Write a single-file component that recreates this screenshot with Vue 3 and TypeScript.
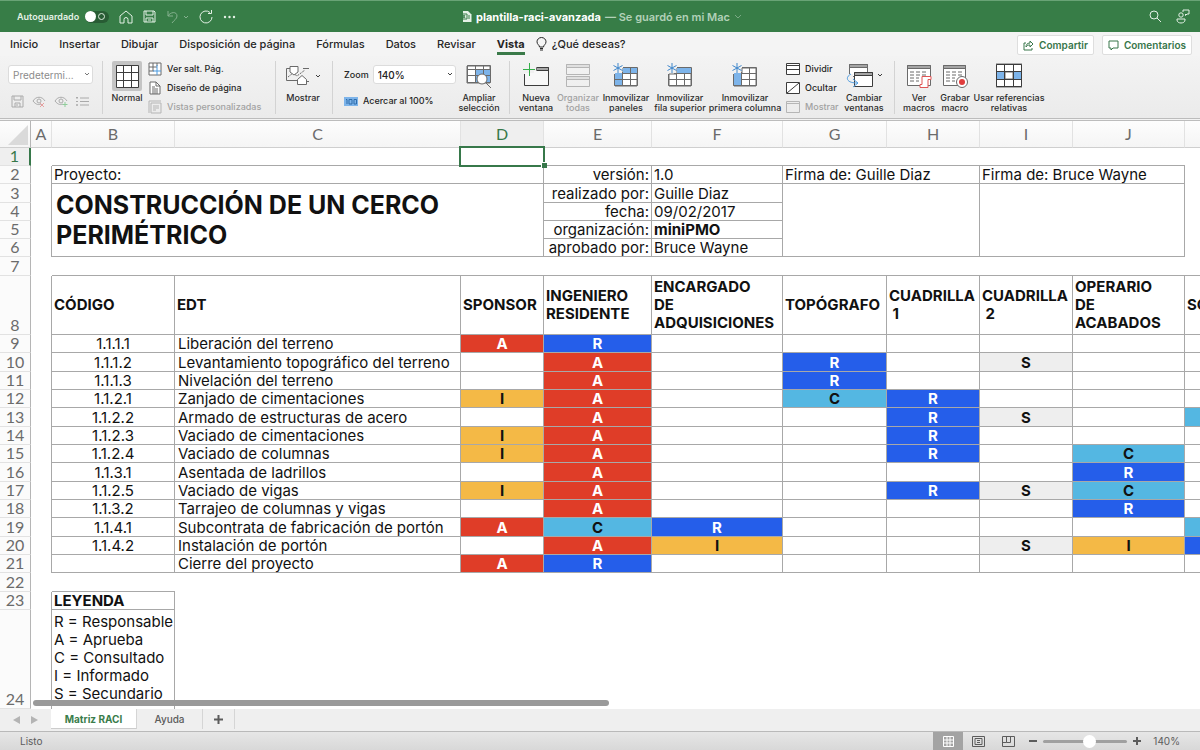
<script setup lang="ts">
import { ref } from 'vue'

interface Cell {
  text?: string
  cols?: number
  rows?: number
  kind?: string
}
interface Row {
  n: number
  size?: string
  cells: Cell[]
}

const menus = ['Inicio', 'Insertar', 'Dibujar', 'Disposición de página', 'Fórmulas', 'Datos', 'Revisar', 'Vista']
const columns = ['A', 'B', 'C', 'D', 'E', 'F', 'G', 'H', 'I', 'J']
const zoom = ref(56)

const blank = (count: number, kind = ''): Cell[] => Array.from({ length: count }, () => ({ kind }))

const tasks: [string, string, string][] = [
  ['1.1.1.1', 'Liberación del terreno', 'AR......'],
  ['1.1.1.2', 'Levantamiento topográfico del terreno', '.A.R.S..'],
  ['1.1.1.3', 'Nivelación del terreno', '.A.R....'],
  ['1.1.2.1', 'Zanjado de cimentaciones', 'IA.CR...'],
  ['1.1.2.2', 'Armado de estructuras de acero', '.A..RS.c'],
  ['1.1.2.3', 'Vaciado de cimentaciones', 'IA..R...'],
  ['1.1.2.4', 'Vaciado de columnas', 'IA..R.C.'],
  ['1.1.3.1', 'Asentada de ladrillos', '.A....R.'],
  ['1.1.2.5', 'Vaciado de vigas', 'IA..RSC.'],
  ['1.1.3.2', 'Tarrajeo de columnas y vigas', '.A....R.'],
  ['1.1.4.1', 'Subcontrata de fabricación de portón', 'ACR....c'],
  ['1.1.4.2', 'Instalación de portón', '.AI..SIr'],
  ['', 'Cierre del proyecto', 'AR......'],
]

const roleCell = (code: string): Cell => {
  if (code === '.') return { kind: 'box' }
  const upper = code.toUpperCase()
  return { text: upper === code ? code : '', kind: `box role role-${upper}` }
}

const info = (label: string, value: string, kind = ''): Cell[] => [
  { text: label, kind: 'box right' },
  { text: value, kind: `box ${kind}` },
]

const rows: Row[] = [
  { n: 1, cells: [{}, ...blank(2, 'under'), { kind: 'under active' }, ...blank(6, 'under'), {}] },
  {
    n: 2,
    cells: [
      { kind: 'side' },
      { text: 'Proyecto:', cols: 3, kind: 'box' },
      ...info('versión:', '1.0'),
      { text: 'Firma de: Guille Diaz', cols: 2, kind: 'box' },
      { text: 'Firma de: Bruce Wayne', cols: 2, kind: 'box' },
      {},
    ],
  },
  {
    n: 3,
    size: 'tall',
    cells: [
      { kind: 'side' },
      { text: 'CONSTRUCCIÓN DE UN CERCO\nPERIMÉTRICO', cols: 3, rows: 4, kind: 'box title' },
      ...info('realizado por:', 'Guille Diaz'),
      { cols: 2, rows: 4, kind: 'box' },
      { cols: 2, rows: 4, kind: 'box' },
      {},
    ],
  },
  { n: 4, cells: [{ kind: 'side' }, ...info('fecha:', '09/02/2017'), {}] },
  { n: 5, cells: [{ kind: 'side' }, ...info('organización:', 'miniPMO', 'strong'), {}] },
  { n: 6, cells: [{ kind: 'side' }, ...info('aprobado por:', 'Bruce Wayne'), {}] },
  { n: 7, size: 'tall', cells: [{}, ...blank(10, 'under')] },
  {
    n: 8,
    size: 'heading',
    cells: [
      { kind: 'side' },
      ...['CÓDIGO', 'EDT', 'SPONSOR', 'INGENIERO\nRESIDENTE', 'ENCARGADO\nDE\nADQUISICIONES', 'TOPÓGRAFO', 'CUADRILLA\n 1', 'CUADRILLA\n 2', 'OPERARIO\nDE\nACABADOS', 'SO'].map(
        (text) => ({ text, kind: 'box head' }),
      ),
    ],
  },
  ...tasks.map(([code, name, roles], i) => ({
    n: i + 9,
    size: i % 3 === 1 ? 'tall' : '',
    cells: [{ kind: 'side' }, { text: code, kind: 'box center' }, { text: name, kind: 'box task' }, ...roles.split('').map(roleCell)],
  })),
  { n: 22, size: 'tall', cells: [{}, { kind: 'under' }, ...blank(9)] },
  { n: 23, cells: [{ kind: 'side' }, { text: 'LEYENDA', kind: 'box strong' }, ...blank(9)] },
  {
    n: 24,
    size: 'last',
    cells: [
      { kind: 'side' },
      { text: 'R = Responsable\nA = Aprueba\nC = Consultado\nI = Informado\nS = Secundario', kind: 'side legend' },
      ...blank(9),
    ],
  },
]
</script>

<template>
  <div class="app">
    <header class="titlebar">
      <div class="quick">
        <label class="auto">Autoguardado
          <input type="checkbox" class="toggle" />
        </label>
        <button aria-label="Inicio"><svg width="14" height="14" viewBox="0 0 14 14"><path d="M1 6 7 1l6 5v7H9V9.500a2 2 0 0 0-4 0V13H1z" /></svg></button>
        <button aria-label="Guardar"><svg width="13" height="13" viewBox="0 0 13 13"><path d="M1 1h10l1 1v10H1zM3 1v4h7V1M3 12V8h7v4M5 10h3" /></svg></button>
        <button class="dim" aria-label="Deshacer"><svg width="23" height="14" viewBox="0 0 23 14"><path d="M2 1v5h5M2 6c2-4 9-5 9 0 0 3-3 4-5 7M18 6l2 2 2-2" /></svg></button>
        <button aria-label="Repetir"><svg width="14" height="14" viewBox="0 0 14 14"><path d="M11 2.500A6 6 0 1 0 13 7M12.500 0v3.500H9" /></svg></button>
        <button aria-label="Más"><svg width="13" height="4" viewBox="0 0 13 4"><g class="solid"><circle cx="2" cy="2" r="1.200" /><circle cx="6.500" cy="2" r="1.200" /><circle cx="11" cy="2" r="1.200" /></g></svg></button>
      </div>
      <h1 class="doc">
        <svg width="11" height="13" viewBox="0 0 11 13"><path class="solid" d="M2 1h5l3.500 3.500V12H2z" /><path class="sheetmark" d="M0 4h6v5H0M2 5l2 3M4 5 2 8M7 6h2M7 8h2" /></svg>
        <strong>plantilla-raci-avanzada</strong>
        <span>— Se guardó en mi Mac</span>
        <svg class="faint" width="8" height="6" viewBox="0 0 8 6"><path d="m1 1 3 3 3-3" /></svg>
      </h1>
      <div class="corner">
        <button aria-label="Buscar"><svg width="13" height="13" viewBox="0 0 13 13"><circle cx="5" cy="5" r="4" /><path d="m8 8 4 4" /></svg></button>
        <button aria-label="Colaboradores"><svg width="15" height="15" viewBox="0 0 15 15"><circle cx="5" cy="6" r="2.200" /><path d="M1 10h8v1c0 4-8 4-8 0zM7 3V1h6v4h-2L9.500 6.500V5" /></svg></button>
      </div>
    </header>

    <nav class="menubar">
      <button v-for="m in menus" :key="m" :class="{ current: m === 'Vista' }">{{ m }}</button>
      <button class="ask"><svg width="11" height="14" viewBox="0 0 11 14"><path d="M3.500 10C3.500 8 1 7.500 1 4.800a4.500 4.300 0 0 1 9 0C10 7.500 7.500 8 7.500 10zM4 13h3M4 11.500h3" /></svg>¿Qué deseas?</button>
      <div class="share">
        <button><svg width="11" height="11" viewBox="0 0 11 11"><path d="M3 3H1v7h8V8M3 7c0-2 1-4 4-4V1l3 3-3 3V5C5 5 4 5.500 3 7z" /></svg>Compartir</button>
        <button><svg width="11" height="11" viewBox="0 0 11 11"><path d="M1 1h9v7H5L3 10V8H1z" /></svg>Comentarios</button>
      </div>
    </nav>

    <section class="ribbon" aria-label="Vista">
      <div class="group g-views">
        <div class="pick preset">
          <select aria-label="Vista de hoja"><option>Predetermi…</option></select>
          <svg width="6" height="5" viewBox="0 0 6 5"><path d="m1 1 2 2 2-2" /></svg>
        </div>
        <div class="mini">
          <button aria-label="Guardar vista"><svg width="13" height="13" viewBox="0 0 13 13"><path d="M1 1h11v11H1zM3 1v4h7V1M4 12V8h5v4M6 9v2" /></svg></button>
          <button aria-label="Salir de vista"><svg width="14" height="13" viewBox="0 0 14 13"><path d="M1 6c3-5 9-5 12 0M1 6c3 4 6 4 8 3" /><circle cx="7" cy="6" r="2" /><path class="red" d="m8 8 4 4m0-4-4 4" /></svg></button>
          <button aria-label="Nueva vista"><svg width="14" height="13" viewBox="0 0 14 13"><path d="M1 6c3-5 9-5 12 0M1 6c3 4 6 4 8 3" /><circle cx="7" cy="6" r="2" /><path class="green" d="M11 7v5M8.500 9.500h5" /></svg></button>
          <button aria-label="Opciones de vista"><svg width="13" height="11" viewBox="0 0 13 11"><path d="M4 2h9M4 5.500h9M4 9h9M0 1.500h2M1 1v2M0 5.500h2M0 9h2M1 8v2" /></svg></button>
        </div>
      </div>

      <div class="group g-normal">
        <button class="tool normal"><span class="pressed"><svg width="25" height="25" viewBox="0 0 25 25"><path class="white dark" d="M1.500 1.500h22v22h-22z" /><path class="dark" d="M1 8.500h23M1 16.500h23M8.500 1v23M16.500 1v23" /></svg></span>Normal</button>
        <div class="stack">
          <button><svg width="14" height="14" viewBox="0 0 14 14"><path class="white" d="M1 1h12v12H1z" /><path d="M1 5h8M1 9h5M5 1v8M9 1v3" /><path class="blue" d="M9 3v10M5 9h8" /></svg>Ver salt. Pág.</button>
          <button><svg width="14" height="14" viewBox="0 0 14 14"><path class="white" d="M2 1h6l4 4v8H2z" /><path d="M8 1v4h4M4 6h3M4 8h6M4 10h6M4 12h6" /></svg>Diseño de página</button>
          <button class="off"><svg width="14" height="14" viewBox="0 0 14 14"><path d="M1 13V1h12M3 3h10v10H3zM5 6h6M5 8h6M5 10h3" /></svg>Vistas personalizadas</button>
        </div>
      </div>

      <div class="group g-show">
        <button class="tool">
          <span class="art"><svg width="38" height="26" viewBox="0 0 38 26"><path d="M7 5.500H2.500v12H13M19 5.500h6M22 18.500h3" /><path class="sketch" d="M4 14l5-4 4 3 8-6" /><path class="white" d="M6 3.500h8V9l-4 3-4-3zM13.500 21.500v-5l4.500-4 4.500 4v5z" /><path class="dark" d="m32 12 2 2 2-2" /></svg></span>Mostrar
        </button>
      </div>

      <div class="group g-zoom">
        <div class="zooming">
          <label class="zoomrow">Zoom
            <span class="pick"><select><option>140%</option></select><svg width="6" height="5" viewBox="0 0 6 5"><path d="m1 1 2 2 2-2" /></svg></span>
          </label>
          <button class="hundred"><svg width="14" height="9" viewBox="0 0 14 9"><path class="bluefill" d="M0 0h14v9H0z" /><path class="navy" d="M2 2.500h1V7M5 2.500h3V7H5zM10 2.500h2.500V7H10z" /></svg>Acercar al 100%</button>
        </div>
        <button class="tool"><span class="art"><svg width="26" height="26" viewBox="0 0 26 26"><path class="white" d="M1 3h23v17H1z" /><path class="bluefill" d="M9 7h15v13H9z" /><path d="M1.500 2.500h23v17h-23zM1 6.500h23M1 12.500h23M9.500 3v17M17.500 3v17" /><circle class="white" cx="16" cy="16" r="5" /><path d="m20 20 5 5" /></svg></span>Ampliar<br />selección</button>
      </div>

      <div class="group g-window">
        <button class="tool w40"><span class="art"><svg width="28" height="26" viewBox="0 0 28 26"><path class="pale" d="M3 8h23v14H3z" /><path class="lid" d="M14.500 4.500h12v3h-12z" /><path class="cut" d="M0 7h12v3H0z" /><path class="dark" d="M2.500 11v11.500h24v-18H15M15 7.500h11" /><path class="green" d="M7.500 0v13M1 6.500h12" /></svg></span>Nueva<br />ventana</button>
        <button class="tool off w44"><span class="art"><svg width="24" height="26" viewBox="0 0 24 26"><path d="M.5 1.500h23v10H.5zM.5 13.500h23v10H.5z" /><path class="haze" d="M.5 1.500h23v3H.5zM.5 13.500h23v3H.5z" /></svg></span>Organizar<br />todas</button>
        <button class="tool w52"><span class="art"><svg width="26" height="26" viewBox="0 0 26 26"><path class="white" d="M2 11h8V5h14v18H2z" /><path class="bluefill" d="M10 4h14v7H10zM2 10h8v13H2z" /><path d="M10 4.500h14.500v18h-23V11M2 16.500h22M10 10.500h14M9.500 9v14M17.500 5v18" /><path class="star" d="M5 0v10M.5 2.500l9 5M.5 7.500l9-5" /></svg></span>Inmovilizar<br />paneles</button>
        <button class="tool w56"><span class="art"><svg width="26" height="26" viewBox="0 0 26 26"><path class="white" d="M2 11h8V5h14v18H2z" /><path class="bluefill" d="M10 4h14v7H10z" /><path d="M10 4.500h14.500v18h-23V11M2 16.500h22M7 10.500h17M9.500 11v12M17.500 11v12" /><path class="star" d="M5 0v10M.5 2.500l9 5M.5 7.500l9-5" /></svg></span>Inmovilizar<br />fila superior</button>
        <button class="tool w74"><span class="art"><svg width="26" height="26" viewBox="0 0 26 26"><path class="white" d="M2 11h8V5h14v18H2z" /><path class="bluefill" d="M2 10h8v13H2z" /><path d="M10 4.500h14.500v18h-23V11M10 16.500h14M10 10.500h14M9.500 9v14M17.500 5v18" /><path class="star" d="M5 0v10M.5 2.500l9 5M.5 7.500l9-5" /></svg></span>Inmovilizar<br />primera columna</button>
        <div class="stack windows">
          <button><svg width="14" height="12" viewBox="0 0 14 12"><path class="white dark" d="M.5.5h13v11H.5z" /><path class="dark" d="M1 2.500h12M1 6.500h12" /></svg>Dividir</button>
          <button><svg width="14" height="12" viewBox="0 0 14 12"><path class="white dark" d="M.5.5h13v11H.5z" /><path class="dark" d="M1 11 13 1" /></svg>Ocultar</button>
          <button class="off"><svg width="14" height="12" viewBox="0 0 14 12"><path d="M.5.5h13v11H.5zM1 2.500h12" /></svg>Mostrar</button>
        </div>
        <button class="tool w38"><span class="art"><svg width="38" height="26" viewBox="0 0 38 26"><path class="white" d="M4.500 1.500h18v12h-18z" /><path class="lid" d="M4.500 1.500h18v3h-18z" /><path class="white dark" d="M9.500 9.500h18v14h-18z" /><path class="lid dark" d="M9.500 9.500h18v3h-18z" /><path class="cut" d="M3 11h5v10H3z" /><path class="blue" d="M6 11c-6 3-5 9 6 9M8 16l5 4-5 4" /><path class="dark" d="m33 11 2 2 2-2" /></svg></span>Cambiar<br />ventanas</button>
      </div>

      <div class="group g-macros">
        <button class="tool w36"><span class="art"><svg width="26" height="26" viewBox="0 0 26 26"><path class="white" d="M1.500 2.500h23v20h-23z" /><path class="lid" d="M1.500 2.500h23v3h-23z" /><path class="dashes" d="M4 9h17M4 12h17M4 15h9M4 18h9" /><path class="red white" d="M16 13.500h9v3h-3v8h-8v-3h2z" /></svg></span>Ver<br />macros</button>
        <button class="tool w36"><span class="art"><svg width="26" height="26" viewBox="0 0 26 26"><path class="white" d="M1.500 2.500h22v20h-22z" /><path class="lid" d="M1.500 2.500h22v3h-22z" /><path class="dashes" d="M4 9h17M4 12h17M4 15h9M4 18h9" /><circle class="white" cx="20" cy="19" r="5.500" /><circle class="dot" cx="20" cy="19" r="3" /></svg></span>Grabar<br />macro</button>
        <button class="tool w72"><span class="art"><svg width="26" height="26" viewBox="0 0 26 26"><path class="white" d="M0 1h26v23H0z" /><path class="bluefill" d="M0 9h26v7H0z" /><path class="white" d="M9 9h8v7H9z" /><path class="dark" d="M.5 1.500h25v22H.5zM1 8.500h24M1 16.500h24M8.500 1v23M17.500 1v23" /></svg></span>Usar referencias<br />relativas</button>
      </div>
    </section>

    <main class="sheet">
      <table>
        <colgroup>
          <col class="c-num" />
          <col v-for="c in columns" :key="c" :class="`c-${c}`" />
          <col class="c-rest" />
        </colgroup>
        <thead>
          <tr>
            <td class="all"><svg width="20" height="20" viewBox="0 0 20 20"><path d="M20 0v20H0z" /></svg></td>
            <th v-for="c in columns" :key="c" scope="col" :class="{ picked: c === 'D' }">{{ c }}</th>
            <th scope="col"></th>
          </tr>
        </thead>
        <tbody>
          <tr v-for="row in rows" :key="row.n" :class="row.size">
            <th scope="row" :class="{ picked: row.n === 1 }">{{ row.n }}</th>
            <td v-for="(cell, i) in row.cells" :key="i" :colspan="cell.cols" :rowspan="cell.rows" :class="cell.kind">{{ cell.text }}</td>
          </tr>
        </tbody>
      </table>
      <div class="scroll"></div>
    </main>

    <footer>
      <div class="tabs">
        <button class="arrow" aria-label="Anterior"><svg width="7" height="8" viewBox="0 0 7 8"><path d="M7 0v8L0 4z" /></svg></button>
        <button class="arrow" aria-label="Siguiente"><svg width="7" height="8" viewBox="0 0 7 8"><path d="M0 0v8l7-4z" /></svg></button>
        <button class="tab open">Matriz RACI</button>
        <button class="tab">Ayuda</button>
        <button class="add" aria-label="Nueva hoja"><svg width="9" height="9" viewBox="0 0 9 9"><path d="M4.500 0v9M0 4.500h9" /></svg></button>
      </div>
      <div class="status">
        <span class="ready">Listo</span>
        <button class="mode on" aria-label="Normal"><svg width="11" height="11" viewBox="0 0 11 11"><path d="M.5.5h10v10H.5zM4 0v11M7 0v11M0 4h11M0 7h11" /></svg></button>
        <button class="mode" aria-label="Diseño"><svg width="13" height="11" viewBox="0 0 13 11"><path d="M.5.5h12v10H.5zM3 2.500h7v6H3zM5 4.500h3M5 6.500h3" /></svg></button>
        <button class="mode" aria-label="Saltos"><svg width="13" height="11" viewBox="0 0 13 11"><path d="M.5.5h12v10H.5zM4.500.5v6h-4M4.500 6.500h4v-6" /></svg></button>
        <button class="step" aria-label="Reducir"><svg width="8" height="8" viewBox="0 0 8 8"><path d="M0 4h8" /></svg></button>
        <input v-model="zoom" type="range" min="0" max="100" aria-label="Zoom" />
        <button class="step" aria-label="Aumentar"><svg width="8" height="8" viewBox="0 0 8 8"><path d="M0 4h8M4 0v8" /></svg></button>
        <span class="percent">140%</span>
      </div>
    </footer>
  </div>
</template>

<style>
body { margin: 0; }
</style>

<style scoped>
* { box-sizing: border-box; }
.app {
  display: flex;
  flex-direction: column;
  height: 100vh;
  overflow: hidden;
  font-family: Inter, "Liberation Sans", sans-serif;
  color: #262626;
  background: #fff;
}
button {
  border: 0;
  padding: 0;
  margin: 0;
  background: none;
  font: inherit;
  color: inherit;
  flex: none;
}
svg { display: block; flex: none; fill: none; stroke: currentColor; stroke-width: 1; }

.titlebar {
  display: grid;
  grid-template-columns: 1fr auto 1fr;
  align-items: center;
  height: 32px;
  flex: none;
  border-top: 1px solid #69a376;
  background: #377d47;
  color: #e4f1e6;
}
.quick { display: flex; align-items: center; gap: 10px; padding-left: 17px; }
.auto { display: flex; align-items: center; gap: 6px; font-size: 9px; font-weight: 600; }
.toggle {
  appearance: none;
  display: flex;
  align-items: center;
  width: 24px;
  height: 12px;
  margin: 0;
  border-radius: 6px;
  background: #285c34;
}
.toggle::before { content: ""; width: 11px; height: 11px; border-radius: 50%; background: #fff; }
.toggle::after { content: ""; width: 5px; height: 5px; margin-left: 2px; border: 1px solid #dcebdd; border-radius: 50%; }
.dim { opacity: 0.45; }
.solid { fill: currentColor; stroke: none; }
.sheetmark { stroke: #377d47; }
.doc { display: flex; align-items: center; gap: 4px; margin: 0; padding-left: 3px; font-size: 11px; font-weight: 600; }
.doc strong { font-weight: 700; color: #fff; }
.doc span { color: #b2d1b8; }
.faint { color: #79a984; }
.corner { display: flex; justify-content: flex-end; gap: 14px; padding-right: 9px; }

.menubar {
  display: flex;
  align-items: stretch;
  gap: 21px;
  height: 24px;
  flex: none;
  padding-left: 10px;
  background: #f4f4f4;
  font-size: 11px;
  font-weight: 500;
}
.menubar > button { border-bottom: 3px solid transparent; margin-bottom: 1px; border-top: 3px solid transparent; }
.menubar > .current { border-bottom-color: #3a7a49; font-weight: 700; }
.menubar > .ask { display: flex; align-items: center; gap: 5px; margin-left: -10px; }
.share { display: flex; gap: 8px; margin: 3px 8px 0 auto; height: 20px; }
.share button {
  display: flex;
  align-items: center;
  gap: 5px;
  padding: 0 5px;
  border: 1px solid #dedede;
  border-radius: 2px;
  background: #fff;
  color: #38764a;
  font-size: 10px;
  font-weight: 600;
}

.ribbon {
  display: flex;
  height: 65px;
  flex: none;
  padding-top: 5px;
  border-bottom: 3px double #bcbcbc;
  background: linear-gradient(#f3f3f3, #ebebeb);
  font-size: 9px;
  font-weight: 500;
  line-height: 10px;
}
.ribbon svg { stroke: #6a6a6a; }
.group { display: flex; flex: none; height: 53px; border-right: 1px solid #d3d3d3; }
.g-views { flex-direction: column; gap: 11px; width: 103px; padding: 4px 9px 0 8px; }
.g-normal { width: 173px; padding-left: 9px; gap: 6px; }
.g-show { width: 57px; padding-left: 8px; }
.g-zoom { width: 177px; padding-left: 11px; gap: 2px; }
.g-window { width: 385px; padding-left: 6px; }
.g-macros { border-right: 0; padding-left: 6px; }
.pick { position: relative; display: flex; height: 19px; }
.pick select {
  appearance: none;
  width: 100%;
  padding: 0 4px;
  border: 1px solid #dcdcdc;
  border-radius: 3px;
  background: #fff;
  color: #222;
  font: inherit;
  font-size: 10px;
}
.pick svg { position: absolute; right: 3px; top: 7px; stroke: #444; }
.preset select { color: #8b8b8b; font-weight: 400; }
.preset svg { stroke: #777; }
.mini { display: flex; gap: 8px; padding-left: 3px; opacity: 0.5; }
.mini button { display: flex; align-items: center; }
.tool { display: flex; flex-direction: column; align-items: center; white-space: nowrap; color: #2c2c2c; text-align: center; }
.ribbon .off { color: #a2a2a2; }
.art { display: flex; align-items: center; height: 26px; margin: 2px 0 4px; }
.normal { width: 30px; }
.pressed { display: grid; place-items: center; width: 30px; height: 30px; margin-bottom: 2px; border-radius: 2px; background: #c4c4c4; }
.stack { display: flex; flex-direction: column; gap: 4px; }
.stack button { display: flex; align-items: center; gap: 5px; height: 15px; white-space: nowrap; }
.windows { width: 63px; padding-left: 4px; }
.ribbon .off svg { stroke: #b5b5b5; }
.g-show .tool { width: 38px; }
.zooming { display: flex; flex-direction: column; gap: 12px; padding-top: 4px; width: 112px; }
.zoomrow { display: flex; align-items: center; gap: 4px; }
.zoomrow .pick { flex: 1; }
.hundred { display: flex; align-items: center; gap: 5px; white-space: nowrap; }
.g-zoom .tool { width: 42px; }
.w36 { width: 36px; }
.w38 { width: 38px; }
.w40 { width: 40px; }
.w44 { width: 44px; }
.w52 { width: 52px; }
.w56 { width: 56px; }
.w72 { width: 72px; }
.w74 { width: 74px; }
.white { fill: #fff; }
.pale { fill: #f8f8f8; stroke: none; }
.bluefill { fill: #7db4ea; stroke: none; }
.lid { fill: #a5a5a5; }
.haze { fill: #e0e0e0; }
.cut { fill: #f0f0f0; stroke: none; }
.ribbon .dark { stroke: #3c3c3c; }
.blue { stroke: #4d9be0; }
.navy { stroke: #2f6cab; }
.star { stroke: #3f87cc; }
.green { stroke: #35b04a; }
.red { stroke: #e05555; }
.dot { fill: #e03c3c; stroke: none; }
.dashes { stroke-dasharray: 4 2; }
.sketch { stroke-dasharray: 2 1; }

.sheet { position: relative; flex: 1; min-height: 0; overflow: hidden; }
table { table-layout: fixed; width: 1305px; border-collapse: separate; border-spacing: 0; font-size: 15px; color: #111; }
.c-num { width: 31px; }
.c-A { width: 21px; }
.c-B { width: 123px; }
.c-C { width: 286px; }
.c-D { width: 83px; }
.c-E { width: 108px; }
.c-F { width: 131px; }
.c-G { width: 104px; }
.c-H, .c-I { width: 93px; }
.c-J { width: 112px; }
.c-rest { width: 120px; }
td, th { padding: 0; }
thead th, .all {
  height: 27px;
  border-right: 1px solid #e2e2e2;
  border-bottom: 1px solid #cfcfcf;
  background: linear-gradient(#fdfdfd, #f5f5f5);
}
thead th { padding-bottom: 2px; }
th { color: #6b6b6b; font-family: Lato, sans-serif; font-size: 16px; font-weight: 400; }
.all { border-right-color: #b5b5b5; }
.all svg { margin: 2px 0 0 8px; fill: #dadada; stroke: none; }
tbody tr { height: 18px; }
tbody tr.tall { height: 19px; }
tbody tr.heading { height: 59px; }
tbody tr.last { height: 99px; }
tbody th {
  padding-bottom: 1px;
  border-right: 1px solid #b5b5b5;
  border-bottom: 1px solid #e2e2e2;
  background: #fbfbfb;
  line-height: 16px;
  vertical-align: bottom;
}
thead th.picked, tbody th.picked { background: #efefef; color: #37784a; }
tbody th.picked { border-right: 2px solid #37784a; }
tbody td { line-height: 17px; white-space: pre; }
.under { border-bottom: 1px solid #a8a8a8; }
.side { border-right: 1px solid #a8a8a8; }
.box { padding: 0 2px; border-right: 1px solid #a8a8a8; border-bottom: 1px solid #a8a8a8; }
.task { padding-left: 3px; }
.right { text-align: right; }
.center { text-align: center; }
.strong { font-weight: 700; }
tbody td.title { padding-left: 4px; font-size: 25px; line-height: 30px; font-weight: 700; }
tbody td.head { font-weight: 700; line-height: 18px; }
tbody td.legend { padding: 3px 0 0 2px; line-height: 18px; vertical-align: top; }
.role { text-align: center; font-weight: 700; }
.role-A { background: #df3d28; color: #fff; }
.role-R { background: #255eea; color: #fff; }
.role-C { background: #54b7e2; }
.role-I { background: #f4b946; }
.role-S { background: #eee; }
.active { position: relative; }
.active::before { content: ""; position: absolute; inset: -2px -1px -2px -2px; border: 2px solid #37784a; }
.active::after { content: ""; position: absolute; right: -3px; bottom: -3px; width: 5px; height: 5px; background: #37784a; border: 1px solid #fff; border-width: 1px 0 0 1px; }
.scroll { position: absolute; left: 33px; bottom: 3px; width: 48%; height: 6px; border-radius: 3px; background: #9a9a9a; }

footer { flex: none; color: #5c5c5c; }
.tabs { display: flex; align-items: flex-start; height: 22px; padding-left: 13px; background: #efefef; font-size: 10px; font-weight: 500; }
.arrow { width: 7px; height: 22px; margin-right: 11px; }
.arrow svg { fill: #b4b4b4; stroke: none; }
.arrow + .tab { margin-left: 2px; }
.tab { width: 66px; height: 20px; border-right: 1px solid #d5d5d5; }
.open { width: 86px; background: #fff; color: #3a7d4b; font-weight: 700; border-bottom: 1px solid #ccc; }
.add { display: grid; place-items: center; width: 32px; height: 20px; border-right: 1px solid #d5d5d5; }
.add svg, .step svg { stroke-width: 2; }
.status {
  display: flex;
  align-items: center;
  height: 19px;
  padding: 0 20px;
  border-top: 1px solid #b9b9b9;
  background: linear-gradient(#e6e6e6, #d8d8d8);
  font-size: 10px;
}
.ready { margin-right: auto; }
.mode { display: grid; place-items: center; width: 30px; height: 18px; }
.on { background: #a3a3a3; color: #fff; }
.step { margin: 0 6px; }
input[type="range"] { appearance: none; width: 84px; height: 14px; margin: 0; background: none; }
input[type="range"]::-webkit-slider-runnable-track { height: 3px; border-radius: 2px; background: #a0a0a0; }
input[type="range"]::-webkit-slider-thumb { appearance: none; width: 13px; height: 13px; margin-top: -5px; border-radius: 50%; background: #fff; }
.percent { width: 33px; text-align: right; }
</style>
